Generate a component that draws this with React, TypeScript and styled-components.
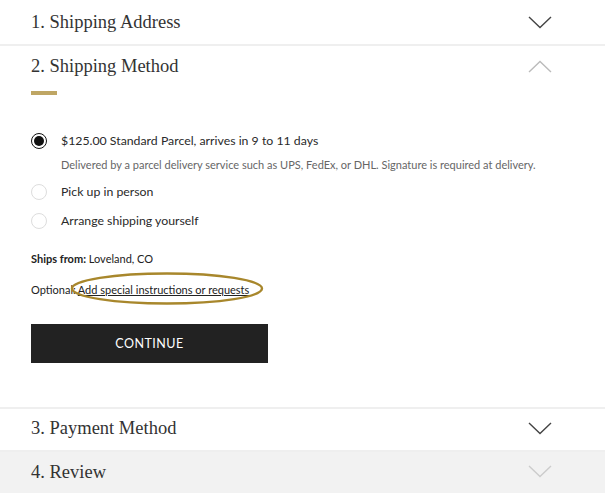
import React from "react";
import styled, { createGlobalStyle } from "styled-components";

const GlobalStyle = createGlobalStyle`
  html, body {
    margin: 0;
    padding: 0;
    background: #fff;
  }
  body {
    font-family: "Lato", "Liberation Sans", sans-serif;
    color: #222;
  }
`;

const Page = styled.div`
  width: 605px;
  display: flex;
  flex-direction: column;
`;

interface SectionProps {
  muted?: boolean;
}

const Section = styled.section<SectionProps>`
  background: ${(p) => (p.muted ? "#f2f2f2" : "#fff")};
  border-bottom: 2px solid #efefef;
`;

interface HeaderProps {
  height: number;
  lift?: number;
}

const Header = styled.div<HeaderProps>`
  box-sizing: border-box;
  height: ${(p) => p.height}px;
  display: flex;
  align-items: center;
  justify-content: space-between;
  padding: 0 53px ${(p) => p.lift || 0}px 31px;
`;

const Title = styled.h2`
  margin: 0;
  font-family: "Liberation Serif", "DejaVu Serif", serif;
  font-weight: 400;
  font-size: 18.5px;
  line-height: 22px;
  color: #333;
`;

const Body = styled.div`
  padding: 5px 31px 44px;
`;

const GoldBar = styled.div`
  width: 26px;
  height: 4px;
  background: #bfa664;
`;

const Options = styled.div`
  margin-top: 31px;
  display: flex;
  flex-direction: column;
`;

const OptionRow = styled.label`
  display: flex;
  align-items: center;
  gap: 14px;
  height: 29px;
  font-size: 12.3px;
  color: #2a2a2a;
`;

interface RadioProps {
  checked?: boolean;
}

const Radio = styled.span<RadioProps>`
  box-sizing: border-box;
  width: 16px;
  height: 16px;
  border-radius: 50%;
  border: ${(p) => (p.checked ? "1.5px solid #111" : "1px solid #ddd")};
  display: flex;
  align-items: center;
  justify-content: center;

  &::after {
    content: "";
    display: ${(p) => (p.checked ? "block" : "none")};
    width: 10px;
    height: 10px;
    border-radius: 50%;
    background: #111;
  }
`;

const Note = styled.p`
  margin: 3px 0 6px 30px;
  font-size: 11px;
  line-height: 13px;
  color: #666;
`;

const Meta = styled.p`
  margin: 0;
  font-size: 11px;
  line-height: 13px;
  color: #222;

  b {
    font-weight: 700;
  }
`;

const ShipsFrom = styled(Meta)`
  margin-top: 17px;
`;

const OptionalLine = styled(Meta)`
  margin-top: 18px;
`;

const LinkWrap = styled.span`
  position: relative;
  margin-left: 2px;
`;

const Link = styled.a`
  color: #222;
  text-decoration: underline;
`;

const Oval = styled.svg`
  position: absolute;
  left: -7px;
  top: -10px;
  pointer-events: none;
  overflow: visible;
`;

const ContinueButton = styled.button`
  display: block;
  margin-top: 28px;
  width: 237px;
  height: 39px;
  border: none;
  background: #222;
  color: #fff;
  font-family: "Lato", "Liberation Sans", sans-serif;
  font-size: 12.5px;
  letter-spacing: 0.5px;
  cursor: pointer;
`;

interface ChevronProps {
  up?: boolean;
  color: string;
}

const Chevron = ({ up, color }: ChevronProps): JSX.Element => (
  <svg width="24" height="13" viewBox="0 0 24 13">
    <polyline
      points={up ? "1,12 12,1.5 23,12" : "1,1 12,11.5 23,1"}
      fill="none"
      stroke={color}
      strokeWidth="1.4"
    />
  </svg>
);

const App = (): JSX.Element => {
  return (
    <Page>
      <GlobalStyle />
      <Section>
        <Header height={44}>
          <Title>1. Shipping Address</Title>
          <Chevron color="#444" />
        </Header>
      </Section>

      <Section>
        <Header height={40}>
          <Title>2. Shipping Method</Title>
          <Chevron up color="#bbb" />
        </Header>
        <Body>
          <GoldBar />
          <Options>
            <OptionRow>
              <Radio checked />
              $125.00 Standard Parcel, arrives in 9 to 11 days
            </OptionRow>
            <Note>
              Delivered by a parcel delivery service such as UPS, FedEx, or
              DHL. Signature is required at delivery.
            </Note>
            <OptionRow>
              <Radio />
              Pick up in person
            </OptionRow>
            <OptionRow>
              <Radio />
              Arrange shipping yourself
            </OptionRow>
          </Options>
          <ShipsFrom>
            <b>Ships from:</b> Loveland, CO
          </ShipsFrom>
          <OptionalLine>
            Optional:
            <LinkWrap>
              <Link href="#">Add special instructions or requests</Link>
              <Oval width="192" height="31">
                <ellipse
                  cx="96"
                  cy="15.5"
                  rx="95"
                  ry="15"
                  fill="none"
                  stroke="#a8872c"
                  strokeWidth="2.4"
                />
              </Oval>
            </LinkWrap>
          </OptionalLine>
          <ContinueButton>CONTINUE</ContinueButton>
        </Body>
      </Section>

      <Section>
        <Header height={41} lift={3}>
          <Title>3. Payment Method</Title>
          <Chevron color="#444" />
        </Header>
      </Section>

      <Section muted>
        <Header height={42} lift={3}>
          <Title>4. Review</Title>
          <Chevron color="#ccc" />
        </Header>
      </Section>
    </Page>
  );
};

export default App;
